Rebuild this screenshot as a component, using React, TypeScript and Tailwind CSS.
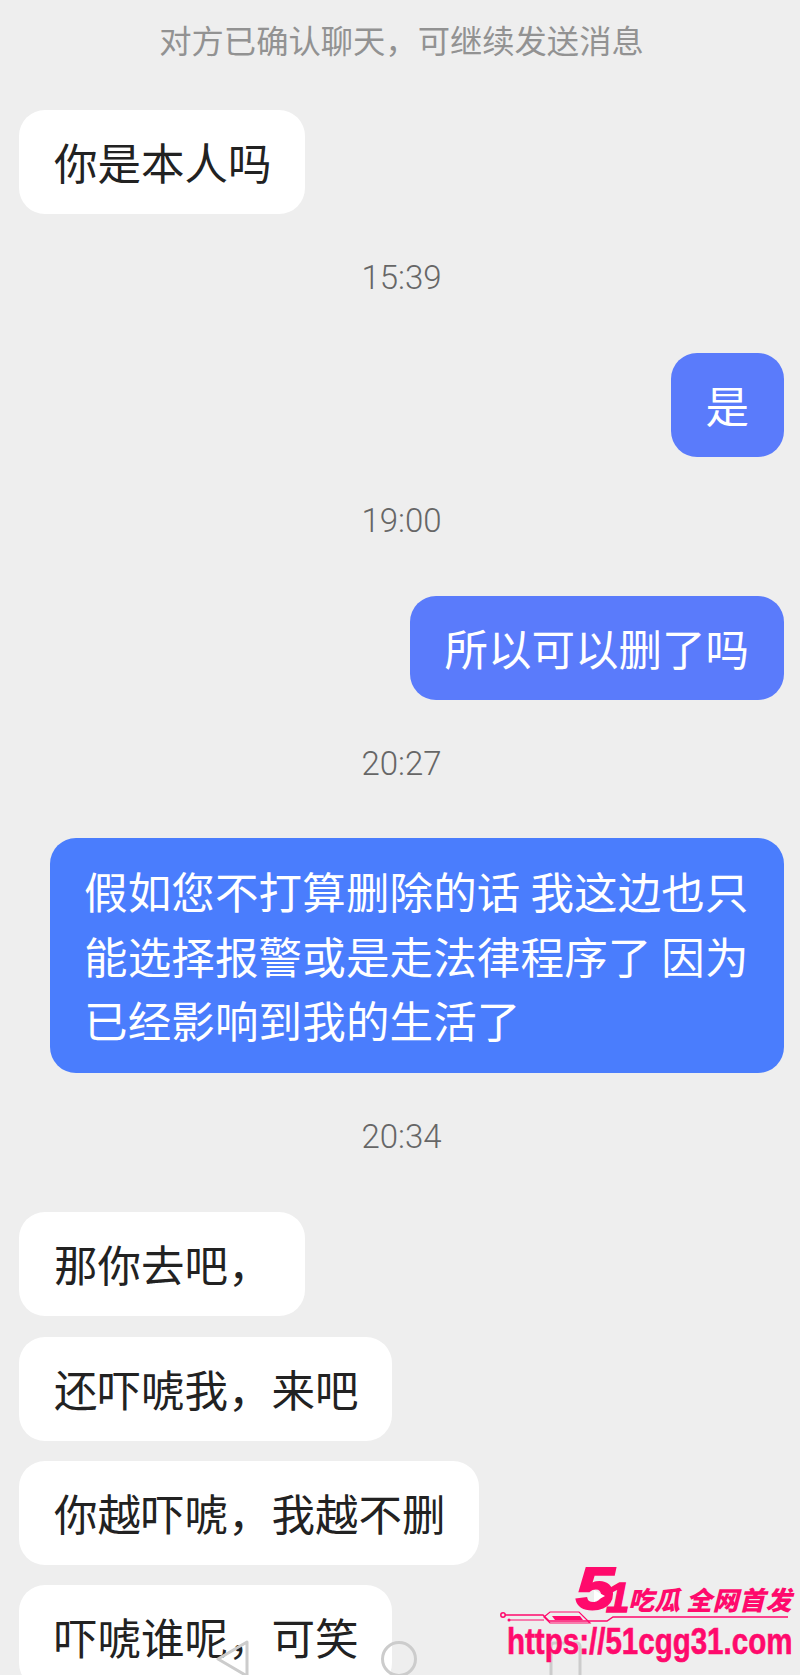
const FONT = "font-['Noto_Sans_CJK_SC','Noto_Sans',sans-serif]";
const PINK = "#ff0a6c";

function Time({ children, cls }: { children: string; cls: string }) {
  return <div className={`text-center text-[33px] leading-[40px] font-light text-[#666666] font-['Roboto',sans-serif] ${cls}`}>{children}</div>;
}

function In({ children, cls = "" }: { children: string; cls?: string }) {
  return (
    <div className={`self-start h-[104px] flex items-center pl-[35px] pr-[33px] rounded-[26px] bg-white text-[43.5px] text-[#222222] whitespace-nowrap ${cls}`}>
      {children}
    </div>
  );
}

function Out({ children, cls = "" }: { children: string; cls?: string }) {
  return (
    <div className={`self-end h-[104px] flex items-center px-[35px] rounded-[26px] bg-[#5a7bfb] text-[43.5px] text-white whitespace-nowrap ${cls}`}>
      {children}
    </div>
  );
}

function Watermark() {
  return (
    <div className="absolute left-[498px] top-[1560px] w-[302px] h-[115px] text-[#ff0a6c]">
      <div className="absolute left-[78px] top-[-1px] origin-left scale-x-[1.15] text-[60px] leading-[60px] font-black italic font-['Liberation_Sans',sans-serif] [-webkit-text-stroke:2px_#ff0a6c]">5</div>
      <svg className="absolute left-[94px] top-[28px]" width="14" height="16" viewBox="0 0 14 16">
        <path d="M2 2L13 8L2 14Z" fill="#ffffff" />
      </svg>
      <div className="absolute left-[108px] top-[17px] text-[42px] leading-[42px] font-black italic font-['Liberation_Sans',sans-serif] [-webkit-text-stroke:1.5px_#ff0a6c]">1</div>
      <div className="absolute left-[130px] top-[20px] flex gap-[6px] text-[26px] leading-[38px] font-black italic whitespace-nowrap font-['Noto_Sans_CJK_SC',sans-serif]">
        <span>吃瓜</span>
        <span className="tracking-[0.5px]">全网首发</span>
      </div>
      <svg className="absolute left-0 top-[50px]" width="302" height="16" viewBox="0 0 302 16" fill="none">
        <circle cx="5" cy="5" r="2.2" stroke={PINK} strokeWidth="1.5" />
        <path d="M7 5H45L51 11H109L115 7H290" stroke={PINK} strokeWidth="1.5" />
        <circle cx="11" cy="10" r="1.5" fill={PINK} />
        <path d="M12 10H46" stroke={PINK} strokeWidth="1" />
        <path d="M46 7L52 2H81L92 13H52Z" stroke={PINK} strokeWidth="1.2" />
        <path d="M54 6H82L85 10H57Z" fill={PINK} />
      </svg>
      <div className="absolute left-[9px] top-[62px] origin-left scale-x-[0.82] text-[36px] leading-[40px] font-bold whitespace-nowrap font-['Liberation_Sans',sans-serif] [-webkit-text-stroke:0.6px_#ff0a6c]">https://51cgg31.com</div>
    </div>
  );
}

export default function App() {
  return (
    <div className={`relative w-[800px] h-[1675px] overflow-hidden bg-[#eeeeee] ${FONT}`}>
      <div className="flex flex-col pl-[19px] pr-[16px]">
        <div className="mt-[17px] h-[44px] flex items-center justify-center text-[32.3px] text-[#929292]">对方已确认聊天，可继续发送消息</div>
        <In cls="mt-[49px]">你是本人吗</In>
        <Time cls="mt-[44px]">15:39</Time>
        <Out cls="mt-[55px]">是</Out>
        <Time cls="mt-[44px]">19:00</Time>
        <Out cls="mt-[55px]">所以可以删了吗</Out>
        <Time cls="mt-[44px]">20:27</Time>
        <div className="self-end mt-[54px] w-[734px] h-[235px] pl-[34px] pr-[20px] py-[21px] rounded-[26px] bg-[#4a7dfd] text-[43.5px] leading-[64.5px] tracking-[0.15px] text-white whitespace-nowrap">
          假如您不打算删除的话 我这边也只
          <br />
          能选择报警或是走法律程序了 因为
          <br />
          已经影响到我的生活了
        </div>
        <Time cls="mt-[44px]">20:34</Time>
        <In cls="mt-[55px]">那你去吧，</In>
        <In cls="mt-[21px]">还吓唬我，来吧</In>
        <In cls="mt-[20px]">你越吓唬，我越不删</In>
        <In cls="mt-[20px]">吓唬谁呢，可笑</In>
      </div>
      <svg className="absolute left-[212px] top-[1640px]" width="40" height="35" viewBox="0 0 40 35" fill="none">
        <path d="M35 2L6 19L35 36Z" stroke="#cccccc" strokeWidth="3" strokeLinejoin="round" />
      </svg>
      <svg className="absolute left-[380px] top-[1640px]" width="40" height="35" viewBox="0 0 40 35" fill="none">
        <circle cx="19" cy="19" r="16.5" stroke="#cccccc" strokeWidth="3" />
      </svg>
      <svg className="absolute left-[548px] top-[1640px]" width="40" height="35" viewBox="0 0 40 35" fill="none">
        <rect x="3" y="3" width="29" height="42" rx="3" stroke="#cccccc" strokeWidth="3" />
      </svg>
      <Watermark />
    </div>
  );
}
